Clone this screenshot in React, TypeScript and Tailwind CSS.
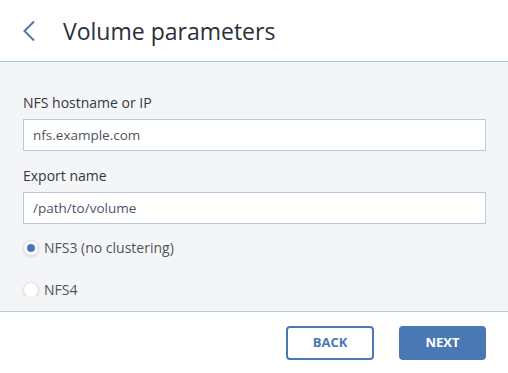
import React, { useState } from 'react';

const font = { fontFamily: '"Open Sans", "Liberation Sans", sans-serif' };

const Field: React.FC<{ label: string; value: string }> = ({ label, value }) => (
  <div className="flex flex-col">
    <label className="text-[14px] leading-[20px] text-[#333842] mb-[6px]">{label}</label>
    <input
      type="text"
      defaultValue={value}
      className="h-[32px] w-[463px] border border-[#b7c8df] bg-white px-[9px] text-[13.5px] text-[#4f545c] outline-none"
    />
  </div>
);

const Radio: React.FC<{ label: string; checked: boolean; onClick: () => void }> = ({ label, checked, onClick }) => (
  <div className="flex items-center h-[20px] cursor-pointer" onClick={onClick}>
    <span className="w-[16px] h-[16px] rounded-full bg-white border border-[#dde2e8] shadow-[0_1px_2px_rgba(0,0,0,0.12)] flex items-center justify-center">
      {checked && <span className="w-[8px] h-[8px] rounded-full bg-[#4a78b5]"></span>}
    </span>
    <span className="ml-[5px] text-[14px] leading-[20px] text-[#4f545c]">{label}</span>
  </div>
);

export default function App() {
  const [mode, setMode] = useState<'nfs3' | 'nfs4'>('nfs3');

  return (
    <div className="w-[508px] h-[373px] bg-white flex flex-col" style={font}>
      {/* Header */}
      <div className="h-[62px] flex items-center border-b border-[#abc3e2] px-[22px]">
        <svg width="14" height="22" viewBox="0 0 14 22" className="mt-[1px]">
          <path d="M12 1.5 L2.5 11 L12 20.5" fill="none" stroke="#4a78b5" strokeWidth="2" />
        </svg>
        <h1 className="ml-[27px] text-[23px] leading-[30px] text-[#2c3037]">Volume parameters</h1>
      </div>

      {/* Body */}
      <div className="h-[249px] bg-[#f4f5f7] flex flex-col pb-[15px]">
        <div className="flex-1 overflow-hidden px-[23px] pt-[31px]">
          <Field label="NFS hostname or IP" value="nfs.example.com" />
          <div className="mt-[15px]">
            <Field label="Export name" value="/path/to/volume" />
          </div>
          <div className="mt-[14px] flex flex-col gap-[22px]">
            <Radio label="NFS3 (no clustering)" checked={mode === 'nfs3'} onClick={() => setMode('nfs3')} />
            <Radio label="NFS4" checked={mode === 'nfs4'} onClick={() => setMode('nfs4')} />
          </div>
        </div>
      </div>

      {/* Footer */}
      <div className="flex-1 border-t border-[#b7c8df] flex items-center justify-end gap-[25px] pr-[22px]">
        <button className="w-[88px] h-[34px] rounded-[4px] border-2 border-[#4a78b5] bg-white text-[#4a78b5] text-[13px] font-bold">
          BACK
        </button>
        <button className="w-[87px] h-[34px] rounded-[4px] bg-[#4a78b5] text-white text-[13px] font-bold">
          NEXT
        </button>
      </div>
    </div>
  );
}
